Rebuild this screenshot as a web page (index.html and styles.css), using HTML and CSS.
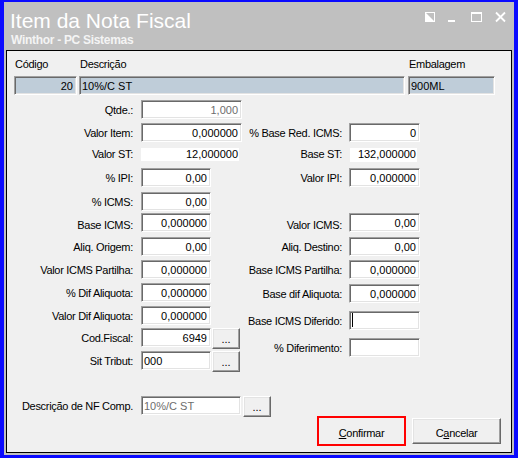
FILE: index.html
```html
<!DOCTYPE html>
<html lang="pt">
<head>
<meta charset="utf-8">
<title>Item da Nota Fiscal</title>
<link rel="stylesheet" href="styles.css">
</head>
<body>
<div class="win">
  <div class="titlebar">
    <div class="titles">
      <div class="t1">Item da Nota Fiscal</div>
      <div class="t2">Winthor - PC Sistemas</div>
    </div>
    <div class="tbtns">
      <svg width="82" height="12" viewBox="0 0 82 12">
        <rect x="0.5" y="1.5" width="9" height="9" fill="none" stroke="#fff"/>
        <polygon points="0,1 0,11 10,11" fill="#fff"/>
        <rect x="23" y="9" width="7" height="2" fill="#fff"/>
        <rect x="46.5" y="1.5" width="10" height="9" fill="none" stroke="#fff"/>
        <rect x="46" y="1" width="11" height="2" fill="#fff"/>
        <path d="M71 1.5 L80 10.5 M80 1.5 L71 10.5" stroke="#fff" stroke-width="1.8" fill="none"/>
      </svg>
    </div>
  </div>
  <div class="panel">
    <div class="head">
      <div class="hcol hc-cod">
        <div class="hlbl">Código</div>
        <div class="box ro num">20</div>
      </div>
      <div class="hcol hc-desc">
        <div class="hlbl">Descrição</div>
        <div class="box ro">10%/C ST</div>
      </div>
      <div class="hcol hc-emb">
        <div class="hlbl">Embalagem</div>
        <div class="box ro">900ML</div>
      </div>
    </div>

    <div class="form">
      <div class="colL">
        <div class="lbl">Qtde.:</div>
        <div class="fld"><div class="box num w101 dim">1,000</div></div>
        <div class="lbl">Valor Item:</div>
        <div class="fld"><div class="box num w101">0,000000</div></div>
        <div class="lbl top0">Valor ST:</div>
        <div class="fld"><div class="plain w98">12,000000</div></div>
        <div class="lbl">% IPI:</div>
        <div class="fld"><div class="box num w70">0,00</div></div>
        <div class="lbl">% ICMS:</div>
        <div class="fld"><div class="box num w70">0,00</div></div>
        <div class="lbl low">Base ICMS:</div>
        <div class="fld"><div class="box num w70">0,000000</div></div>
        <div class="lbl">Aliq. Origem:</div>
        <div class="fld"><div class="box num w70">0,00</div></div>
        <div class="lbl">Valor ICMS Partilha:</div>
        <div class="fld"><div class="box num w70">0,000000</div></div>
        <div class="lbl">% Dif Aliquota:</div>
        <div class="fld"><div class="box num w70">0,000000</div></div>
        <div class="lbl">Valor Dif Aliquota:</div>
        <div class="fld"><div class="box num w70">0,000000</div></div>
        <div class="lbl">Cod.Fiscal:</div>
        <div class="fld"><div class="box num w70">6949</div><div class="btn3">...</div></div>
        <div class="lbl">Sit Tribut:</div>
        <div class="fld"><div class="box w70">000</div><div class="btn3">...</div></div>
      </div>
      <div class="colR">
        <div class="lbl">% Base Red. ICMS:</div>
        <div class="fld"><div class="box num w71">0</div></div>
        <div class="lbl top0">Base ST:</div>
        <div class="fld"><div class="plain w67">132,000000</div></div>
        <div class="lbl">Valor IPI:</div>
        <div class="fld"><div class="box num w71">0,000000</div></div>
        <div class="lbl low">Valor ICMS:</div>
        <div class="fld"><div class="box num w71">0,00</div></div>
        <div class="lbl">Aliq. Destino:</div>
        <div class="fld"><div class="box num w71">0,00</div></div>
        <div class="lbl">Base ICMS Partilha:</div>
        <div class="fld"><div class="box num w71">0,000000</div></div>
        <div class="lbl">Base dif Aliquota:</div>
        <div class="fld"><div class="box num w71">0,000000</div></div>
        <div class="lbl">Base ICMS Diferido:</div>
        <div class="fld"><div class="box w71"><span class="caret"></span></div></div>
        <div class="lbl">% Diferimento:</div>
        <div class="fld"><div class="box w71"></div></div>
      </div>
    </div>

    <div class="nfrow">
      <div class="lbl nflbl">Descrição de NF Comp.</div>
      <div class="fld"><div class="box w100 dim">10%/C ST</div><div class="btn3 nfbtn">...</div></div>
    </div>

    <div class="actions">
      <div class="pbtn confirm"><u>C</u>onfirmar</div>
      <div class="pbtn">C<u>a</u>ncelar</div>
    </div>
  </div>
</div>
</body>
</html>
```

FILE: styles.css
```css
html, body {
  margin: 0;
  padding: 0;
}
body {
  width: 518px;
  height: 458px;
  overflow: hidden;
  font-family: "Liberation Sans", Arial, sans-serif;
  font-size: 11px;
  color: #000;
}
.win {
  box-sizing: border-box;
  width: 518px;
  height: 458px;
  border-style: solid;
  border-color: #0a0aff;
  border-width: 2px 4px 3px 4px;
  background: #c0c0c0;
  padding: 0 2px 2px 2px;
  display: flex;
  flex-direction: column;
}
.titlebar {
  height: 48px;
  flex: none;
  display: flex;
  align-items: flex-start;
}
.titles {
  padding: 7px 0 0 4px;
  color: #fff;
}
.t1 {
  font-size: 21px;
  line-height: 24px;
  white-space: nowrap;
}
.t2 {
  font-size: 12px;
  font-weight: bold;
  line-height: 14px;
  letter-spacing: -0.3px;
  padding-left: 1px;
  color: #f4f4f4;
  white-space: nowrap;
}
.tbtns {
  margin-left: auto;
  padding: 9px 5px 0 0;
}
.tbtns svg {
  display: block;
}
.panel {
  flex: 1;
  box-sizing: border-box;
  border: 1px solid #000;
  background: #f0f0f0;
  display: flex;
  flex-direction: column;
}
.head {
  display: flex;
  padding: 7px 0 0 7px;
}
.hc-cod { width: 63px; }
.hc-desc { width: 326px; margin-left: 2px; }
.hc-emb { width: 87px; margin-left: 3px; }
.hlbl {
  height: 13px;
  line-height: 13px;
  margin-bottom: 5px;
  padding-left: 1px;
  letter-spacing: -0.3px;
  white-space: nowrap;
}
.box {
  box-sizing: border-box;
  height: 19px;
  border: 1px solid;
  border-color: #a0a0a0 #ffffff #ffffff #a0a0a0;
  box-shadow: inset 1px 1px #696969, inset -1px -1px #e3e3e3;
  background: #fff;
  padding: 3px 3px 1px 2px;
  line-height: 13px;
  white-space: nowrap;
  overflow: hidden;
}
.box.ro {
  background: #bfcdd9;
}
.num {
  text-align: right;
}
.dim {
  color: #6d6d6d;
}
.w101 { width: 101px; }
.w100 { width: 100px; }
.w70 { width: 70px; }
.w71 { width: 71px; }
.plain {
  box-sizing: border-box;
  height: 13px;
  line-height: 13px;
  background: #fff;
  text-align: right;
  padding-right: 1px;
  white-space: nowrap;
}
.w98 { width: 98px; }
.w67 { width: 67px; margin-left: 1px; height: 14px; }
.form {
  display: flex;
  margin-top: 5px;
}
.colL {
  display: grid;
  width: 235px;
  grid-template-columns: 126px 101px;
  column-gap: 8px;
  grid-template-rows: 23px 25px 20px 24px 21px 24px 23px 23px 23px 22px 23px 22px;
}
.colR {
  display: grid;
  padding-top: 23px;
  grid-template-columns: 100px 71px;
  column-gap: 7px;
  grid-template-rows: 25px 20px 45px 24px 23px 24px 27px 27px 20px;
}
.lbl {
  text-align: right;
  padding-top: 4px;
  line-height: 13px;
  letter-spacing: -0.3px;
  white-space: nowrap;
}
.lbl.top0 { padding-top: 0; }
.lbl.low { padding-top: 6px; }
.fld {
  display: flex;
  align-items: flex-start;
}
.btn3 {
  box-sizing: border-box;
  width: 28px;
  height: 21px;
  margin-left: 1px;
  border: 1px solid;
  border-color: #ffffff #696969 #696969 #ffffff;
  box-shadow: inset -1px -1px #a0a0a0, inset 1px 1px #e3e3e3;
  background: #f0f0f0;
  text-align: center;
  line-height: 17px;
  padding-top: 2px;
  font-size: 11px;
}
.caret {
  display: block;
  width: 1px;
  height: 14px;
  margin-top: -2px;
  background: #000;
}
.nfrow {
  display: flex;
  margin-top: 23px;
  height: 20px;
}
.nflbl {
  width: 126px;
  margin-right: 8px;
}
.nfbtn {
  margin-left: 2px;
}
.actions {
  display: flex;
  justify-content: flex-end;
  align-items: center;
  gap: 6px;
  padding-right: 10px;
  height: 30px;
}
.pbtn {
  box-sizing: border-box;
  width: 89px;
  height: 26px;
  border: 1px solid;
  border-color: #ffffff #696969 #696969 #ffffff;
  box-shadow: inset -1px -1px #a0a0a0, inset 1px 1px #e3e3e3;
  background: #f0f0f0;
  text-align: center;
  line-height: 20px;
  padding-top: 4px;
  letter-spacing: -0.3px;
}
.pbtn.confirm {
  height: 30px;
  border: 2px solid #ff0000;
  box-shadow: none;
  padding-top: 5px;
}
.pbtn u {
  text-decoration: underline;
}
```
